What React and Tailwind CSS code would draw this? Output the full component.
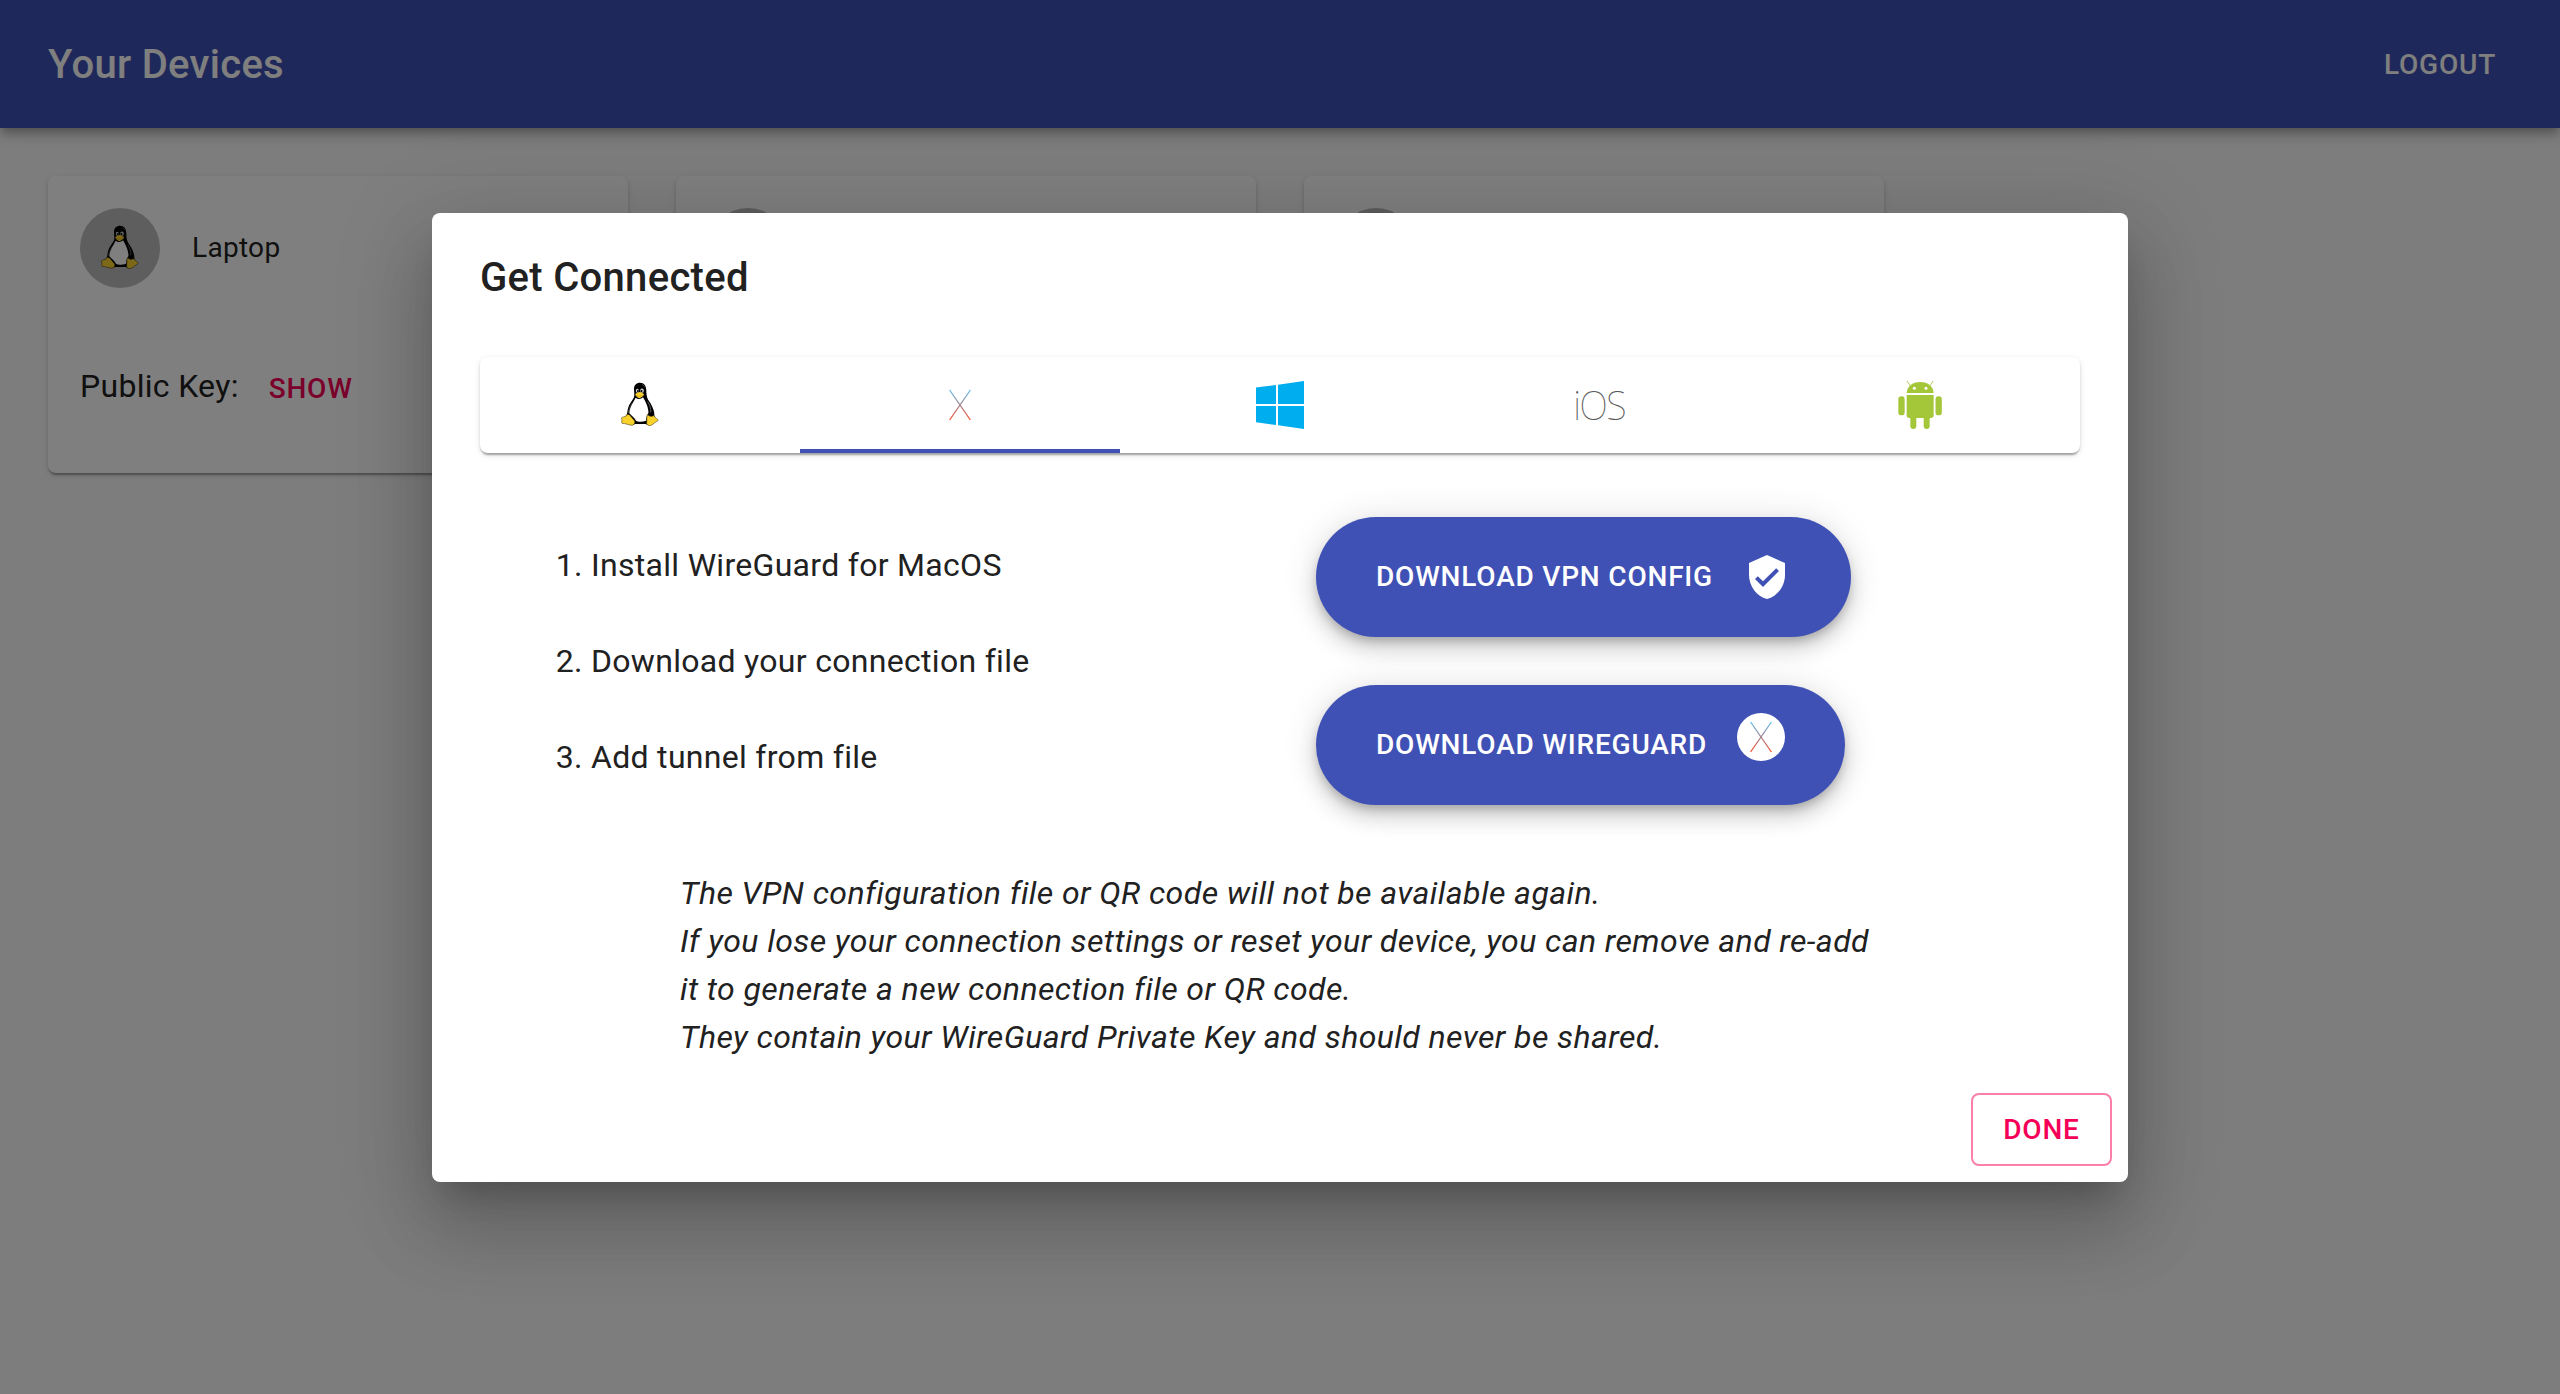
const ROBOTO = "font-['Roboto',sans-serif]";

function Tux({ className }) {
  return (
    <svg className={className} viewBox="48 33 144 144">
      <path
        d="M120 38C109 38 102 45 102 57C102 67 105 76 101 84C96 93 87 102 84 115C82 122 83 128 80 134L74 142L76 158L96 166L106 162H137L144 166L156 164L168 150L163 136C164 124 156 106 149 96C142 86 139 78 139 62C139 46 132 38 120 38Z"
        fill="#000"
      />
      <path d="M107 83C113 88 122 88 129 82C135 92 143 106 145 122C146 128 145 132 141 135L138 152C128 156 114 156 108 152C104 144 96 138 88 130C88 115 98 100 103 91Z" fill="#fff" />
      <path d="M81 134C86 132 89 134 92 139L104 153C106 158 102 165 96 166C86 165 76 160 66 160C63 158 68 150 64 144C66 140 76 142 81 134Z" fill="#f8d12c" stroke="#332b08" strokeWidth="1.5" />
      <path d="M141 136C144 133 146 138 151 139C157 140 161 136 163 138C165 144 173 147 175 151C170 156 163 158 157 164C152 168 142 168 140 161Z" fill="#f8d12c" stroke="#332b08" strokeWidth="1.5" />
      <ellipse cx="112" cy="62" rx="4.500" ry="6" fill="#ccc" />
      <ellipse cx="126" cy="62" rx="5.500" ry="6.500" fill="#ccc" />
      <circle cx="113.500" cy="63" r="2.800" fill="#000" />
      <circle cx="124.500" cy="63" r="3" fill="#000" />
      <path d="M106 72C110 69 115 66 119 66C124 67 128 70 132 72C132 79 122 84 117 84C112 83 106 78 106 72Z" fill="#f8d12c" />
      <path d="M107 75C113 80 122 80 131 75" fill="none" stroke="#b98a10" strokeWidth="1.500" />
      <path d="M143 95C150 105 153 115 152 127" fill="none" stroke="#999" strokeWidth="1.800" />
      <path d="M97 99C90 108 86 119 85 129" fill="none" stroke="#777" strokeWidth="1.500" />
      <path d="M126 44C131 45 133 48 134 52" fill="none" stroke="#777" strokeWidth="1.500" />
    </svg>
  );
}

function OsX({ className, id }) {
  return (
    <svg className={className} viewBox="0 0 48 48">
      <defs>
        <linearGradient id={id} gradientUnits="userSpaceOnUse" x1="0" y1="9" x2="0" y2="39">
          <stop offset="0" stopColor="#5fbfee" />
          <stop offset="0.5" stopColor="#a07f8c" />
          <stop offset="1" stopColor="#f9502f" />
        </linearGradient>
      </defs>
      <path d="M13.600 9L34.400 39M34.400 9L13.600 39" stroke={`url(#${id})`} strokeWidth="1.300" fill="none" />
    </svg>
  );
}

function Windows({ className }) {
  return (
    <svg className={className} viewBox="0 0 144 144" fill="#00adef">
      <path d="M0 19.500L60 12V69H0ZM66 11L144 0V69H66ZM0 75H60V132L0 124ZM66 75H144V144L66 133Z" />
    </svg>
  );
}

function IosMark({ className }) {
  return (
    <svg className={className} viewBox="0 0 48 48">
      <text
        x="-3.1 3.9 33.7"
        y="39"
        transform="scale(0.9 1)"
        fontFamily="Noto Sans"
        fontWeight="100"
        fontSize="41.500"
        fill="#555"
      >
        iOS
      </text>
    </svg>
  );
}

function Android({ className }) {
  return (
    <svg className={className} viewBox="1068 33 144 144" fill="#a4c639">
      <path d="M1100 69C1101 50 1117 36 1140.500 36C1164 36 1180 50 1181 69Z" />
      <path d="M1102 34L1110 46M1179 34L1171 46" stroke="#a4c639" strokeWidth="2.500" strokeLinecap="round" />
      <path d="M1100 75H1181V136Q1181 144 1173 144H1108Q1100 144 1100 136Z" />
      <rect x="1075" y="79" width="19" height="57" rx="9.500" />
      <rect x="1186.500" y="79" width="19" height="57" rx="9.500" />
      <rect x="1111" y="130" width="18" height="47" rx="9" />
      <rect x="1151" y="130" width="18" height="47" rx="9" />
      <circle cx="1123" cy="55" r="4.500" fill="#fff" />
      <circle cx="1158" cy="55" r="4.500" fill="#fff" />
    </svg>
  );
}

function VerifiedUser({ className }) {
  return (
    <svg className={className} viewBox="0 0 24 24" fill="currentColor">
      <path d="M12 1L3 5v6c0 5.550 3.840 10.740 9 12 5.160-1.260 9-6.450 9-12V5l-9-4zm-2 16l-4-4 1.410-1.410L10 14.170l6.590-6.590L18 9l-8 8z" />
    </svg>
  );
}

const PAPER =
  "rounded-lg bg-white shadow-[0_4px_2px_-2px_rgba(0,0,0,0.2),0_2px_2px_0_rgba(0,0,0,0.14),0_2px_6px_0_rgba(0,0,0,0.12)]";
const BUTTON_TEXT = "text-[28px] leading-[49px] font-medium tracking-[0.02857em] uppercase";

function DeviceCard({ name }) {
  return (
    <section className={`h-[297px] w-[580px] ${PAPER}`}>
      <header className="flex items-center gap-8 p-8">
        <span className="flex size-20 items-center justify-center rounded-full bg-[#bdbdbd]">
          {name && <Tux className="size-12" />}
        </span>
        {name && <span className="text-[28px] leading-[40px] tracking-[0.01071em]">{name}</span>}
      </header>
      {name && (
        <div className="flex items-center px-8 pt-[31px]">
          <span className="text-[32px] leading-[70px] tracking-[0.00938em]">Public Key:</span>
          <button className={`ml-[14px] px-4 pt-1 text-[#f50057] ${BUTTON_TEXT}`}>Show</button>
        </div>
      )}
    </section>
  );
}

function Fab({ children }) {
  return (
    <button
      className={`flex h-[120px] items-center rounded-full bg-[#3f51b5] px-[60px] text-white shadow-[0_6px_10px_-2px_rgba(0,0,0,0.2),0_12px_20px_0_rgba(0,0,0,0.14),0_2px_36px_0_rgba(0,0,0,0.12)] ${BUTTON_TEXT}`}
    >
      {children}
    </button>
  );
}

const TABS = [
  { id: "linux", icon: <Tux className="size-12" /> },
  { id: "mac", icon: <OsX className="size-12" id="osx-tab" /> },
  { id: "windows", icon: <Windows className="size-12" /> },
  { id: "ios", icon: <IosMark className="size-12 overflow-visible" /> },
  { id: "android", icon: <Android className="size-12" /> },
];

function ConnectDialog() {
  return (
    <div
      role="dialog"
      className="flex h-[969px] w-[1696px] flex-col rounded-lg bg-white shadow-[0_22px_30px_-14px_rgba(0,0,0,0.2),0_48px_76px_6px_rgba(0,0,0,0.14),0_18px_92px_16px_rgba(0,0,0,0.12)]"
    >
      <h2 className="px-12 pt-[33px] pb-[31px] text-[40px] leading-[64px] font-medium tracking-[0.0075em]">
        Get Connected
      </h2>
      <div className="flex-1 px-12 pt-4">
        <div className={`grid h-24 grid-cols-5 overflow-hidden ${PAPER}`}>
          {TABS.map((tab) => (
            <button
              key={tab.id}
              className={
                tab.id === "mac"
                  ? "flex items-center justify-center border-b-4 border-[#3f51b5] pt-1"
                  : "flex items-center justify-center"
              }
            >
              {tab.icon}
            </button>
          ))}
        </div>
        <div className="mt-16 flex">
          <ol className="w-[836px] list-outside list-decimal space-y-12 pt-6 pl-[111px] text-[32px] leading-[48px] tracking-[0.00938em]">
            <li>Install WireGuard for MacOS</li>
            <li>Download your connection file</li>
            <li>Add tunnel from file</li>
          </ol>
          <div className="flex flex-col items-start gap-12">
            <Fab>
              <span className="pb-0.5">Download VPN Config</span>
              <VerifiedUser className="ml-[30px] size-12" />
            </Fab>
            <Fab>
              <span className="pb-0.5">Download WireGuard</span>
              <span className="mb-4 ml-[30px] rounded-full bg-white">
                <OsX className="size-12" id="osx-fab" />
              </span>
            </Fab>
          </div>
        </div>
        <p className="mt-16 ml-[200px] text-[32px] leading-[48px] tracking-[0.42px] italic">
          The VPN configuration file or QR code will not be available again.
          <br />
          If you lose your connection settings or reset your device, you can remove and re-add
          <br />
          it to generate a new connection file or QR code.
          <br />
          They contain your WireGuard Private Key and should never be shared.
        </p>
      </div>
      <div className="flex justify-end p-4">
        <button
          className={`flex h-[73px] w-[141px] items-center justify-center rounded-lg border-2 border-[#f50057]/50 text-[#f50057] ${BUTTON_TEXT}`}
        >
          Done
        </button>
      </div>
    </div>
  );
}

export default function App() {
  return (
    <div className={`relative h-[1394px] w-full overflow-hidden bg-[#fafafa] text-[#212121] ${ROBOTO}`}>
      <header className="relative flex h-32 items-center justify-between bg-[#3f51b5] px-12 text-white shadow-[0_4px_8px_-2px_rgba(0,0,0,0.2),0_8px_10px_0_rgba(0,0,0,0.14),0_2px_20px_0_rgba(0,0,0,0.12)]">
        <h1 className="pt-0.5 text-[40px] leading-[64px] font-medium tracking-[0.0075em]">Your Devices</h1>
        <button className={`px-4 ${BUTTON_TEXT}`}>Logout</button>
      </header>
      <main className="flex gap-12 p-12">
        <DeviceCard name="Laptop" />
        <DeviceCard />
        <DeviceCard />
      </main>
      <div className="absolute inset-0 flex items-start justify-center bg-black/50 pt-[213px]">
        <ConnectDialog />
      </div>
    </div>
  );
}
